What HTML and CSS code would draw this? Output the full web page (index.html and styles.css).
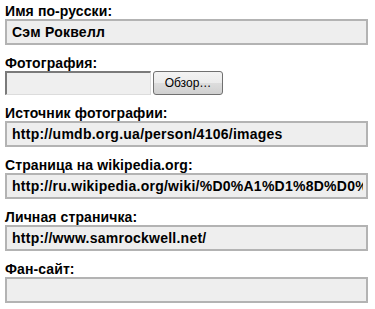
FILE: index.html
```html
<!DOCTYPE html>
<html>
<head>
    <title>Персона</title>
    <link rel="stylesheet" href="styles.css">
</head>
<body>
    <div class="form">
        <div class="field">
            <label>Имя по-русски:</label>
            <input type="text" class="text-box" value="Сэм Роквелл">
        </div>

        <div class="field">
            <label>Фотография:</label>
            <div class="file-row">
                <div class="file-box"></div>
                <button class="browse">Обзор…</button>
            </div>
        </div>

        <div class="field">
            <label>Источник фотографии:</label>
            <input type="text" class="text-box" value="http://umdb.org.ua/person/4106/images">
        </div>

        <div class="field">
            <label>Страница на wikipedia.org:</label>
            <input type="text" class="text-box" value="http://ru.wikipedia.org/wiki/%D0%A1%D1%8D%D0%BC_%D0%A0%D0%BE%D0%BA%D0%B2%D0%B5%D0%BB%D0%BB">
        </div>

        <div class="field">
            <label>Личная страничка:</label>
            <input type="text" class="text-box" value="http://www.samrockwell.net/">
        </div>

        <div class="field">
            <label>Фан-сайт:</label>
            <input type="text" class="text-box" value="">
        </div>
    </div>
</body>
</html>
```

FILE: styles.css
```css
body {
    margin: 0;
    background: #ffffff;
    color: #000000;
    font-family: "Liberation Sans", Arial, sans-serif;
}

.form { padding: 4px 0 0 5px; }
.field { margin-bottom: 11px; }

.field label {
    display: block;
    font-size: 14px;
    font-weight: bold;
    line-height: 15px;
    letter-spacing: 0.1px;
}

.text-box {
    display: block;
    box-sizing: border-box;
    width: 363px;
    height: 26px;
    margin: 0;
    padding: 0 3px 0 5px;
    border: 2px solid #b3b3b3;
    background: #eeeeee;
    color: #000000;
    font-family: "Liberation Sans", Arial, sans-serif;
    font-size: 14px;
    font-weight: bold;
    letter-spacing: 0.25px;
    outline: none;
}

.file-row { display: flex; gap: 2px; height: 24px; }

.file-box {
    box-sizing: border-box;
    width: 146px;
    height: 24px;
    background: #efefef;
    border-top: 2px solid #7a7a7a;
    border-left: 2px solid #7a7a7a;
    border-right: 1px solid #dcdcdc;
    border-bottom: 1px solid #dcdcdc;
}

.browse {
    box-sizing: border-box;
    width: 70px;
    height: 24px;
    margin: 0;
    padding: 0;
    border: 1px solid #707070;
    border-radius: 3px;
    background: linear-gradient(#f3f3f3, #ebebeb 50%, #dddddd 50%, #d0d0d0);
    color: #000000;
    font-family: "Liberation Sans", Arial, sans-serif;
    font-size: 12px;
}
```
